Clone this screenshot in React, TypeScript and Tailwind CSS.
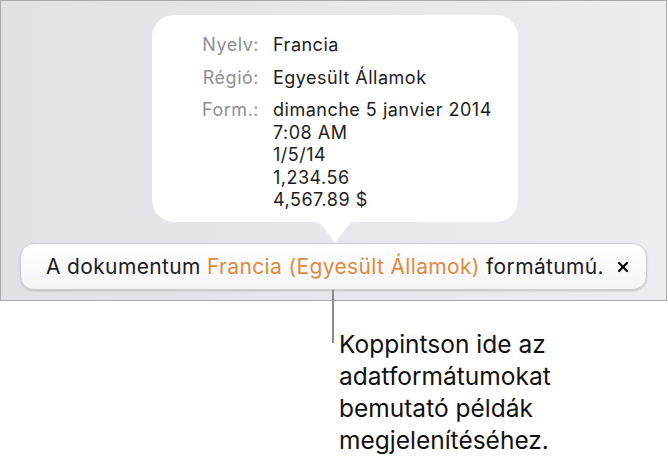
import { X } from 'lucide-react';

const rows = [
  { label: 'Nyelv:', values: ['Francia'] },
  { label: 'Régió:', values: ['Egyesült Államok'] },
  { label: 'Form.:', values: ['dimanche 5 janvier 2014', '7:08 AM', '1/5/14', '1,234.56', '4,567.89 $'] },
];

function Bubble() {
  return (
    <div className="ml-[151px] mt-[14px] w-[366px] h-[207px] rounded-[22px] bg-white pt-[19px]">
      <div className="grid grid-cols-[107px_1fr] gap-x-[14px] gap-y-[10px] text-[18px] leading-[22.5px] tracking-[0.5px]">
        {rows.map((row) => (
          <div key={row.label} className="contents">
            <div className="text-right text-[#8e8e93]">{row.label}</div>
            <div className="text-[#1c1c1e]">
              {row.values.map((v) => (
                <div key={v}>{v}</div>
              ))}
            </div>
          </div>
        ))}
      </div>
    </div>
  );
}

function Arrow() {
  return (
    <svg className="ml-[312px] block" width="44" height="21" viewBox="0 0 44 21">
      <path d="M0 0 H44 C39 0 36 2 33 6 L22 21 L11 6 C8 2 5 0 0 0 Z" fill="#ffffff" />
    </svg>
  );
}

export default function App() {
  return (
    <div className="w-[668px] h-[471px] bg-white font-['Inter','Liberation_Sans',sans-serif]">
      <div className="w-[667px] h-[301px] border border-[#a9a9ab] bg-gradient-to-r from-[#e2e2e6] to-[#ededf1]">
        <Bubble />
        <Arrow />
        <div className="relative ml-[19px] w-[627px] h-[47px] rounded-[14px] border border-[#cdcdd0] bg-gradient-to-b from-white to-[#f5f5f6] shadow-[0_1px_2px_rgba(0,0,0,0.18)] flex items-center pl-[25px] pr-[15px] text-[21px] tracking-[0.35px] text-[#1c1c1e]">
          <span className="flex-1">
            A dokumentum <span className="text-[#df8a3f]">Francia (Egyesült Államok)</span> formátumú.
          </span>
          <X size={16} strokeWidth={3.2} className="text-black" />
          <div className="absolute left-[311px] top-[46px] w-[1.5px] h-[53px] bg-[#8a8a8a]" />
        </div>
      </div>
      <div className="ml-[339px] mt-[27px] text-[24.5px] leading-[32px] text-[#111]">
        Koppintson ide az
        <br />
        adatformátumokat
        <br />
        bemutató példák
        <br />
        megjelenítéséhez.
      </div>
    </div>
  );
}
